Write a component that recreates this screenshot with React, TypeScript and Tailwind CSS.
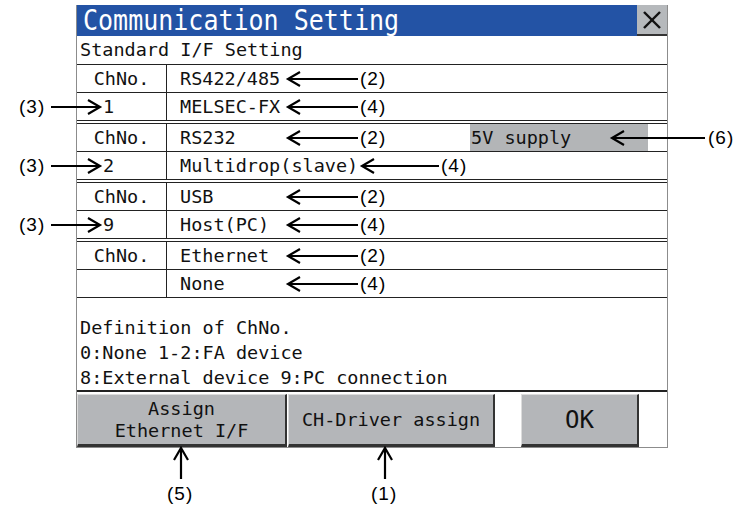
import React from 'react';

const mono = "font-['DejaVu_Sans_Mono',monospace] text-[18.5px] text-[#111]";
const line = 'border-[#222]';

type RowProps = { left?: string; right: string; num?: boolean; extra?: React.ReactNode };

const Row: React.FC<RowProps> = ({ left, right, num, extra }) => (
  <div className={`flex h-[28px] border-b ${line} leading-[27px]`}>
    <div className={`w-[90px] shrink-0 border-r ${line} ${num ? 'pl-[26px]' : 'text-center'}`}>{left}</div>
    <div className="flex flex-1 pl-[13px]">
      <span>{right}</span>
      {extra}
    </div>
  </div>
);

const DoubleLine = () => (
  <>
    <div className="h-[2px]" />
    <div className="h-px bg-[#222]" />
  </>
);

const Block: React.FC<{ name: string; ch: string; driver: string; last?: boolean; extra?: React.ReactNode }> = ({ name, ch, driver, last, extra }) => (
  <div>
    <Row left="ChNo." right={name} extra={extra} />
    <Row left={ch} right={driver} num />
    {!last && <DoubleLine />}
  </div>
);

const btn =
  'bg-[#b4b6b9] border-t border-l border-t-[#dcdcdc] border-l-[#dcdcdc] border-r-2 border-b-[3px] border-r-[#333] border-b-[#333] flex flex-col items-center justify-center leading-[22px]';

// annotation arrows
const LeftArrow = ({ x1, x2, y }: { x1: number; x2: number; y: number }) => (
  <g>
    <line x1={x1 + 1} y1={y} x2={x2} y2={y} />
    <polyline points={`${x1 + 12},${y - 7} ${x1},${y} ${x1 + 12},${y + 7}`} />
  </g>
);

const RightArrow = ({ x1, x2, y }: { x1: number; x2: number; y: number }) => (
  <g>
    <line x1={x1} y1={y} x2={x2 - 1} y2={y} />
    <polyline points={`${x2 - 12},${y - 7} ${x2},${y} ${x2 - 12},${y + 7}`} />
  </g>
);

const UpArrow = ({ x, y1, y2 }: { x: number; y1: number; y2: number }) => (
  <g>
    <line x1={x} y1={y1 + 1} x2={x} y2={y2} />
    <polyline points={`${x - 7},${y1 + 12} ${x},${y1} ${x + 7},${y1 + 12}`} />
  </g>
);

const labels: { t: string; x: number; y: number }[] = [
  { t: '(2)', x: 360, y: 79 },
  { t: '(4)', x: 360, y: 107 },
  { t: '(2)', x: 360, y: 138 },
  { t: '(4)', x: 441, y: 166 },
  { t: '(2)', x: 360, y: 197 },
  { t: '(4)', x: 360, y: 225 },
  { t: '(2)', x: 360, y: 256 },
  { t: '(4)', x: 360, y: 284 },
  { t: '(6)', x: 708, y: 138 },
  { t: '(3)', x: 19, y: 107 },
  { t: '(3)', x: 19, y: 166 },
  { t: '(3)', x: 19, y: 225 },
  { t: '(5)', x: 167, y: 494 },
  { t: '(1)', x: 371, y: 494 },
];

export default function App() {
  return (
    <div className="relative w-[736px] h-[511px] bg-white overflow-hidden">
      <div className={`ml-[76px] mt-[5px] w-[592px] border-l border-r border-b border-[#8c8c8c] ${mono}`}>
        {/* title bar */}
        <div className="flex h-[31px]">
          <div className="flex-1 bg-[#2353a5] text-white text-[25px] leading-[31px] pl-[6px]">
            <span className="inline-block scale-y-110">Communication Setting</span>
          </div>
          <div className="w-[30px] bg-[#b6b9bc] border-b-2 border-[#333] flex items-center justify-center">
            <svg width="20" height="20" viewBox="0 0 20 20" stroke="#111" strokeWidth="2.4">
              <line x1="2" y1="2" x2="18" y2="18" />
              <line x1="18" y1="2" x2="2" y2="18" />
            </svg>
          </div>
        </div>

        <div className={`h-[29px] border-b ${line} pl-[3px] leading-[28px]`}>Standard I/F Setting</div>

        <Block name="RS422/485" ch="1" driver="MELSEC-FX" />
        <Block
          name="RS232"
          ch="2"
          driver="Multidrop(slave)"
          extra={<div className="ml-auto mr-[19px] w-[178px] bg-[#b3b5b7] pl-[1px]">5V supply</div>}
        />
        <Block name="USB" ch="9" driver="Host(PC)" />
        <Block name="Ethernet" ch="" driver="None" last />

        {/* channel definition */}
        <div className={`h-[94px] border-b-2 ${line} pt-[17px] pl-[3px] leading-[25px]`}>
          <div>Definition of ChNo.</div>
          <div>0:None 1-2:FA device</div>
          <div>8:External device 9:PC connection</div>
        </div>

        {/* buttons */}
        <div className="flex h-[55px] pt-[2px]">
          <div className={`${btn} w-[210px]`}>
            <span>Assign</span>
            <span>Ethernet I/F</span>
          </div>
          <div className={`${btn} w-[207px] ml-px`}>CH-Driver assign</div>
          <div className={`${btn} w-[118px] ml-[26px] text-[24px]`}>OK</div>
        </div>
      </div>

      {/* callouts */}
      <svg
        className="absolute inset-0 pointer-events-none"
        width="736"
        height="511"
        fill="none"
        stroke="#000"
        strokeWidth="2.2"
      >
        <LeftArrow x1={288} x2={358} y={79} />
        <LeftArrow x1={288} x2={358} y={107} />
        <LeftArrow x1={288} x2={358} y={138} />
        <LeftArrow x1={612} x2={705} y={138} />
        <LeftArrow x1={362} x2={439} y={166} />
        <LeftArrow x1={288} x2={358} y={197} />
        <LeftArrow x1={288} x2={358} y={225} />
        <LeftArrow x1={288} x2={358} y={256} />
        <LeftArrow x1={288} x2={358} y={284} />
        <RightArrow x1={51} x2={100} y={107} />
        <RightArrow x1={51} x2={100} y={166} />
        <RightArrow x1={51} x2={100} y={225} />
        <UpArrow x={181} y1={448} y2={479} />
        <UpArrow x={385} y1={448} y2={479} />
      </svg>
      {labels.map((l, i) => (
        <span
          key={i}
          className="absolute font-['Liberation_Sans',Arial,sans-serif] text-[19px] leading-[22px] tracking-[1px] text-black"
          style={{ left: l.x, top: l.y - 11 }}
        >
          {l.t}
        </span>
      ))}
    </div>
  );
}
